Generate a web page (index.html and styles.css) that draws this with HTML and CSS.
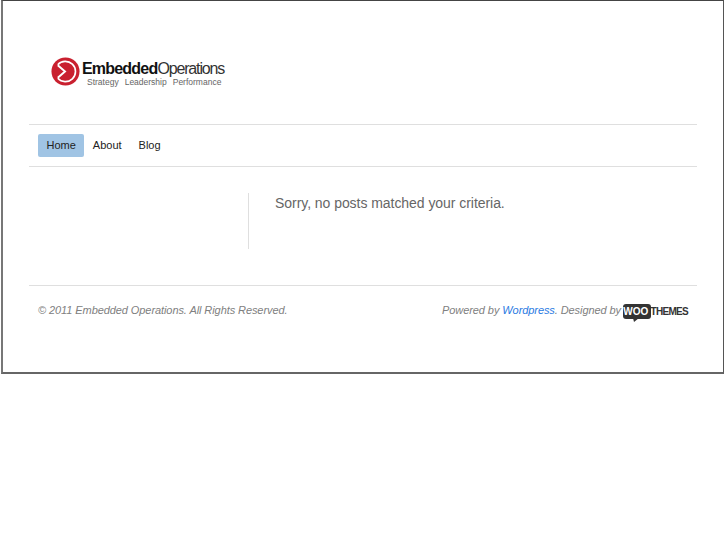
FILE: index.html
```html
<!DOCTYPE html>
<html lang="en">
<head>
    <meta charset="UTF-8">
    <meta name="viewport" content="width=device-width, initial-scale=1.0">
    <title>Embedded Operations</title>
    <link rel="stylesheet" href="styles.css">
</head>
<body>
    <div class="wrapper">
        <!-- Logo -->
        <div class="header">
            <a class="logo" href="#">
                <svg class="logo-mark" width="29" height="29" viewBox="0 0 30 30">
                    <circle cx="15" cy="15" r="14.5" fill="#c9202f"/>
                    <path d="M7 8 A10.5 10.5 0 1 1 7 22" fill="none" stroke="#fff" stroke-width="1.7"/>
                    <path d="M7 8.5 L14.5 15 L7 21.5" fill="none" stroke="#fff" stroke-width="2"/>
                </svg>
                <div class="logo-text">
                    <div class="logo-name"><strong>Embedded</strong>Operations</div>
                    <div class="logo-tag"><span>Strategy</span><span>Leadership</span><span>Performance</span></div>
                </div>
            </a>
        </div>

        <div class="nav">
            <a class="current" href="#">Home</a>
            <a href="#">About</a>
            <a href="#">Blog</a>
        </div>

        <div class="content">
            <div class="sidebar"></div>
            <div class="main">
                <p>Sorry, no posts matched your criteria.</p>
            </div>
        </div>

        <div class="footer">
            <p>&copy; 2011 Embedded Operations. All Rights Reserved.</p>
            <div class="credit">
                <p>Powered by <a href="#">Wordpress</a>. Designed by</p>
                <div class="woo">
                    <svg class="woo-tail" width="30" height="18" viewBox="0 0 30 18">
                        <rect x="0" y="0" width="28" height="15" rx="3" fill="#333"/>
                        <path d="M10 14 L16 14 L11 18 Z" fill="#333"/>
                    </svg>
                    <span class="woo-badge">WOO</span>
                    <span class="woo-name">THEMES</span>
                </div>
            </div>
        </div>
    </div>
</body>
</html>
```

FILE: styles.css
```css
body {
    font-family: "Liberation Sans", Arial, sans-serif;
    background-color: white;
    margin: 0;
    padding: 0;
}
a {
    text-decoration: none;
}
p {
    margin: 0;
}
.wrapper {
    width: 723px;
    height: 374px;
    margin-left: 1px;
    padding: 0 26px;
    box-sizing: border-box;
    border-style: solid;
    border-width: 1px 1px 2px 2px;
    border-color: #444 #555 #666 #777;
}
.header {
    height: 123px;
    padding: 55px 0 0 22px;
    box-sizing: border-box;
}
.logo {
    display: flex;
    align-items: flex-start;
}
.logo-mark {
    margin: 1px 2px 0 0;
    flex-shrink: 0;
}
.logo-name {
    font-size: 16px;
    line-height: 14px;
    letter-spacing: -1.15px;
    color: #333;
    margin-top: 6px;
}
.logo-name strong {
    color: #111;
    letter-spacing: -0.8px;
}
.logo-tag {
    display: flex;
    gap: 6px;
    font-size: 8.5px;
    line-height: 10px;
    color: #666;
    margin: 1px 0 0 5px;
}
.nav {
    display: flex;
    align-items: center;
    height: 41px;
    padding-left: 9px;
    border-top: 1px solid #dfdfdf;
    border-bottom: 1px solid #dfdfdf;
}
.nav a {
    font-size: 11px;
    line-height: 23px;
    color: #222;
    padding: 0 8.5px;
    border-radius: 2px;
}
.nav a.current {
    background-color: #a0c4e4;
}
.content {
    display: flex;
    height: 119px;
    padding-top: 26px;
    box-sizing: border-box;
    border-bottom: 1px solid #dfdfdf;
}
.sidebar {
    width: 219px;
    height: 56px;
    border-right: 1px solid #dfdfdf;
}
.main {
    padding-left: 26px;
    font-size: 14px;
    line-height: 20px;
    letter-spacing: -0.05px;
    color: #666;
}
.footer {
    display: flex;
    justify-content: space-between;
    align-items: flex-start;
    padding: 16px 9px 0;
    font-size: 11px;
    line-height: 16px;
    font-style: italic;
    letter-spacing: -0.08px;
    color: #808080;
}
.credit {
    display: flex;
    gap: 2px;
}
.credit a {
    color: #2a7ae2;
}
.woo {
    position: relative;
    display: flex;
    height: 18px;
    width: 65px;
    font-style: normal;
    font-weight: bold;
    letter-spacing: 0;
}
.woo-tail {
    position: absolute;
    left: 0;
    top: 2px;
}
.woo-badge {
    position: relative;
    width: 28px;
    text-align: center;
    font-size: 10px;
    line-height: 19px;
    color: white;
}
.woo-name {
    font-size: 10px;
    line-height: 19px;
    letter-spacing: -0.7px;
    color: #333;
    margin-left: 2px;
}
```
